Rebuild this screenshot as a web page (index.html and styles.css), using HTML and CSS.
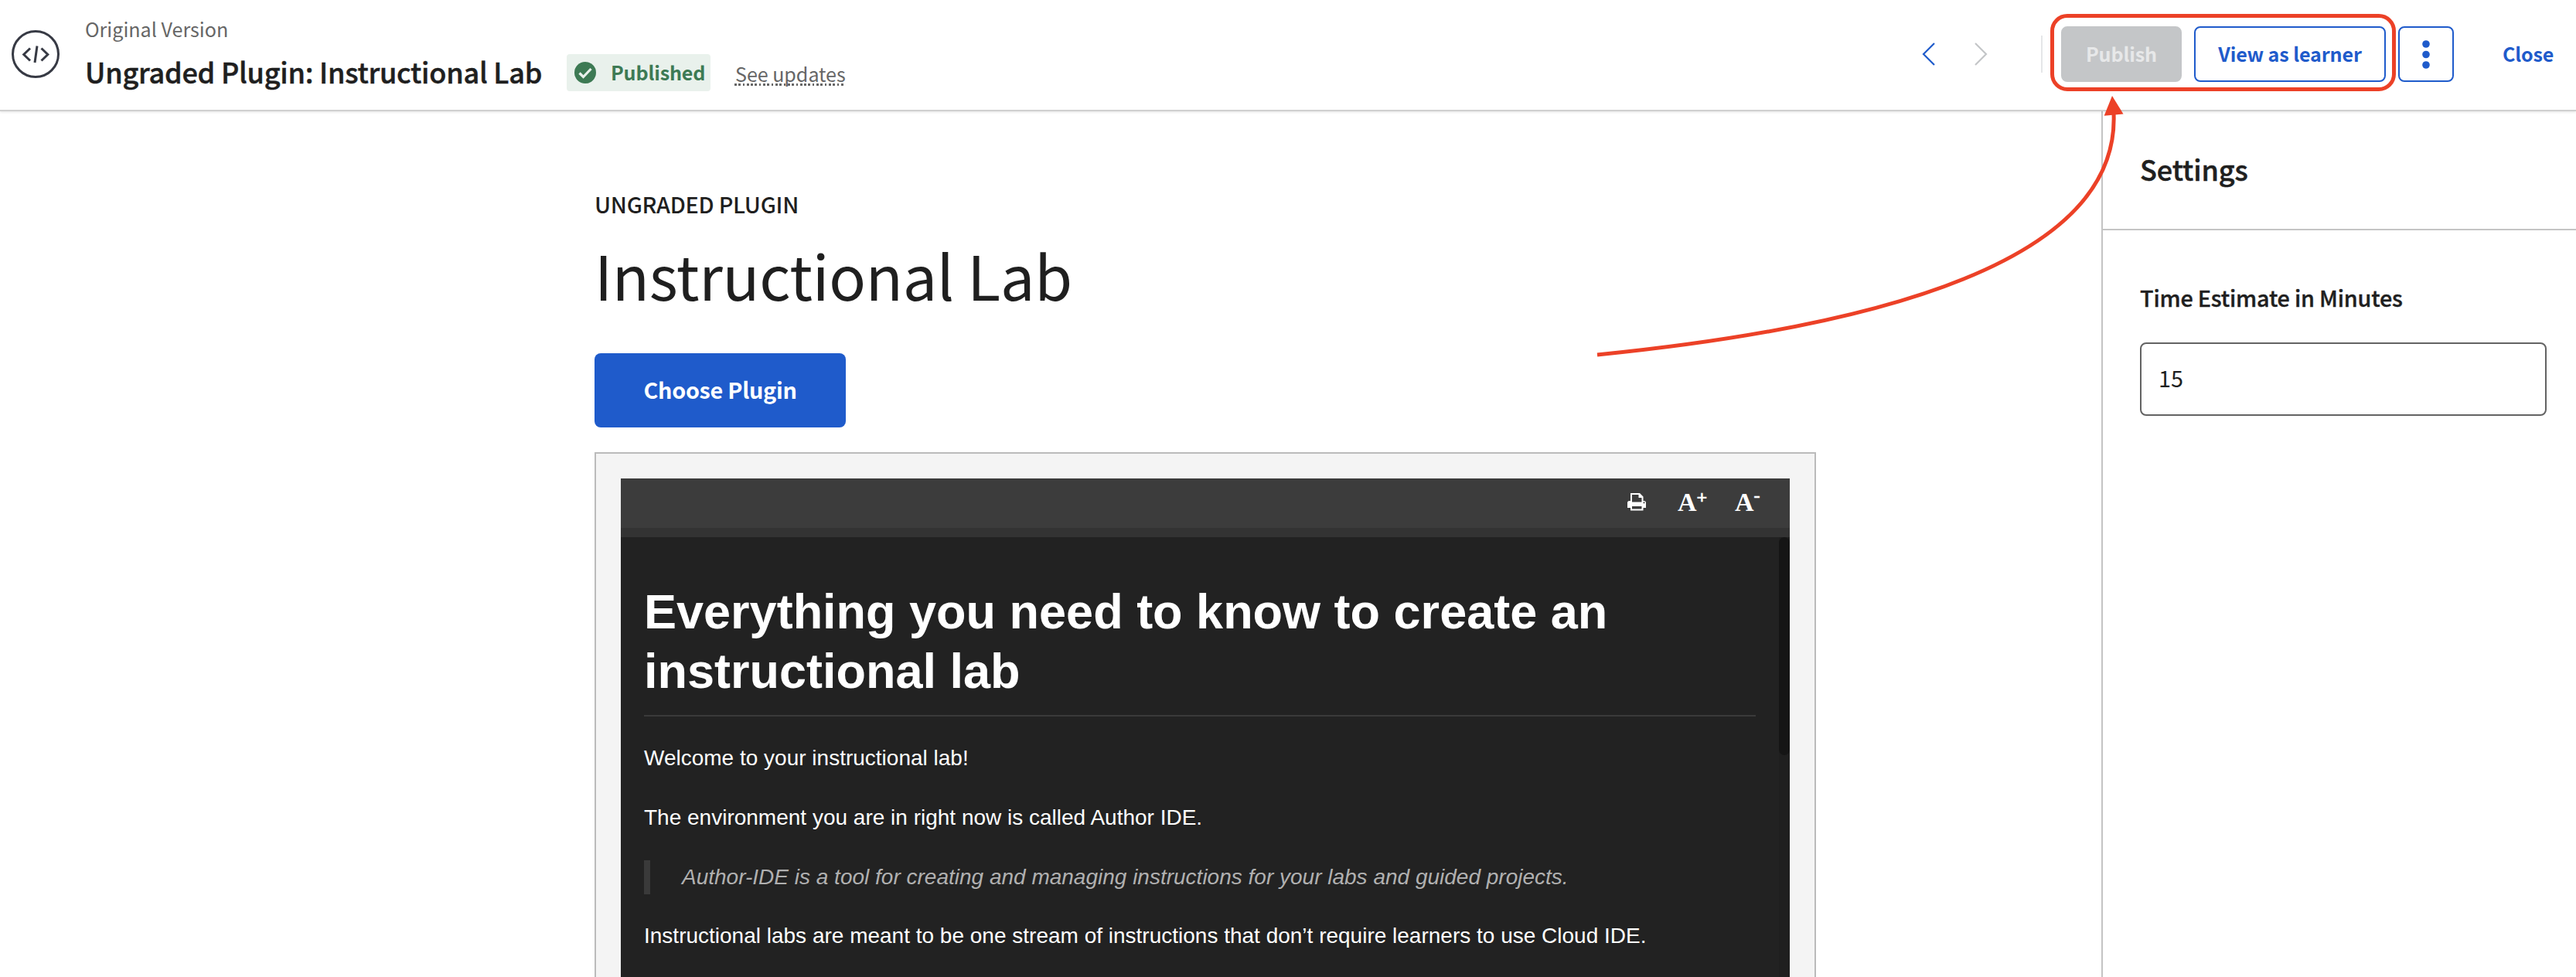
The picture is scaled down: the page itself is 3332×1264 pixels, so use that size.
FILE: index.html
```html
<!DOCTYPE html>
<html lang="en">
<head>
<meta charset="utf-8">
<title>Ungraded Plugin: Instructional Lab</title>
<link rel="stylesheet" href="styles.css">
</head>
<body>
<header class="topbar">
  <svg class="type-icon" width="62" height="62" viewBox="0 0 62 62" fill="none" stroke="#373a44" stroke-width="3">
    <circle cx="31" cy="31" r="29.5"/>
    <path d="M24 23.500l-8.300 8 8.300 8M38.500 23.500l8.300 8-8.300 8M33 20.500l-3 21.500"/>
  </svg>
  <div class="heading">
    <div class="version">Original Version</div>
    <div class="title-row">
      <div class="title">Ungraded Plugin: Instructional Lab</div>
      <div class="chip">
        <svg width="28" height="28" viewBox="0 0 28 28"><circle cx="14" cy="14" r="14" fill="#3d7a54"/><path d="M6.500 14.500l5 5L21.500 9" fill="none" stroke="#e9f1ec" stroke-width="3.200"/></svg>
        <span>Published</span>
      </div>
      <a class="updates">See updates</a>
    </div>
  </div>
  <div class="actions">
    <svg class="prev" width="18" height="30" viewBox="0 0 18 30" fill="none" stroke="#1f5bcb" stroke-width="2.200"><path d="M16 1L2 15l14 14"/></svg>
    <svg class="next" width="18" height="30" viewBox="0 0 18 30" fill="none" stroke="#c4c6c8" stroke-width="2.200"><path d="M2 1l14 14L2 29"/></svg>
    <div class="divider"></div>
    <button class="btn publish">Publish</button>
    <button class="btn view">View as learner</button>
    <button class="btn more"><svg width="10" height="37" viewBox="0 0 10 37" fill="#1f5bcb"><circle cx="5" cy="5" r="4.800"/><circle cx="5" cy="18.500" r="4.800"/><circle cx="5" cy="32" r="4.800"/></svg></button>
    <a class="close">Close</a>
  </div>
</header>
<div class="page">
  <main class="content">
    <div class="eyebrow">UNGRADED PLUGIN</div>
    <h1 class="name">Instructional Lab</h1>
    <button class="choose">Choose Plugin</button>
    <div class="frame">
      <div class="toolbar">
        <svg class="printer" width="24" height="23" viewBox="0 0 24 23"><path fill="#fff" fill-rule="evenodd" d="M4 0H16L20.500 4.500V10H21.500Q24 10 24 12.500V19H20.500V22.500H4V19H0V12.500Q0 10 2.500 10H4ZM6 2V11.500H18.500V6H14.500V2ZM6 17V20.500H18.500V17ZM21.500 11.300a1 1 0 1 0 .010 0Z"/></svg>
        <span class="font-btn">A<sup class="plus">+</sup></span>
        <span class="font-btn">A<sup class="minus">-</sup></span>
      </div>
      <div class="doc">
        <div class="scrollbar"><div class="thumb"></div></div>
        <h2>Everything you need to know to create an<br>instructional lab</h2>
        <p>Welcome to your instructional lab!</p>
        <p>The environment you are in right now is called Author IDE.</p>
        <blockquote>Author-IDE is a tool for creating and managing instructions for your labs and guided projects.</blockquote>
        <p>Instructional labs are meant to be one stream of instructions that don’t require learners to use Cloud IDE.</p>
      </div>
    </div>
  </main>
  <aside class="settings">
    <div class="settings-head">Settings</div>
    <div class="settings-body">
      <label class="label" for="minutes">Time Estimate in Minutes</label>
      <input class="minutes" id="minutes" value="15">
    </div>
  </aside>
</div>
<div class="highlight"></div>
<svg class="arrow" width="700" height="350" viewBox="2060 120 700 350"><path d="M2066 459Q2745 391 2734 146" fill="none" stroke="#ec4127" stroke-width="5"/><path d="M2732 124L2746.500 147.500 2721.700 149.800Z" fill="#ec4127"/></svg>
</body>
</html>
```
FILE: styles.css
```css
* { box-sizing: border-box; }
body {
  margin: 0;
  width: 3332px;
  height: 1264px;
  overflow: hidden;
  position: relative;
  background: #fff;
  color: #1f1f1f;
  font-family: "Noto Sans CJK SC", "Open Sans", sans-serif;
}
button { font-family: inherit; margin: 0; }
.topbar {
  position: relative;
  z-index: 1;
  display: flex;
  height: 144px;
  padding-left: 15px;
  background: #fff;
  border-bottom: 2px solid #d0d0d0;
  box-shadow: 0 1px 3px rgba(0, 0, 0, .12);
}
.type-icon { margin: 39px 33px 0 0; }
.heading { padding-top: 21px; }
.version { font-size: 25.1px; line-height: 32px; color: #666; }
.title-row { display: flex; align-items: flex-start; margin-top: 15px; white-space: nowrap; }
.title { width: 593px; font-size: 36px; line-height: 48px; font-weight: 500; letter-spacing: -.22px; -webkit-text-stroke: .5px #1f1f1f; }
.chip {
  display: flex;
  align-items: center;
  gap: 19px;
  width: 186px;
  height: 48px;
  margin: 2px 0 0 30px;
  padding: 0 0 0 10px;
  border-radius: 4px;
  background: #e9f1ec;
  color: #3d7a54;
  font-size: 25.1px;
  font-weight: 700;
  letter-spacing: -.15px;
  line-height: 46px;
}
.chip span { padding-bottom: 2px; }
.updates {
  width: 143px;
  margin: 11px 0 0 31px;
  padding-left: 1px;
  font-size: 25.1px;
  line-height: 32px;
  height: 32px;
  letter-spacing: -.05px;
  color: #666;
  background: repeating-linear-gradient(90deg, #666 0 2.700px, transparent 2.700px 5.300px) left bottom / 100% 3px no-repeat;
}
.actions { display: flex; align-items: center; height: 72px; margin: 34px 29px 0 auto; }
.prev { margin-right: 49px; }
.next { margin-right: 69px; }
.divider { width: 2px; height: 48px; margin-right: 24px; background: #e5e6e8; }
.btn {
  height: 72px;
  padding: 0 0 2px;
  border: 2px solid #1f5bcb;
  border-radius: 8px;
  background: #fff;
  color: #1f5bcb;
  font-size: 25.1px;
  font-weight: 700;
  letter-spacing: -.13px;
  line-height: 66px;
}
.publish { width: 156px; margin-right: 16px; background: #c4c6c8; border-color: #c4c6c8; color: #e7e8e9; }
.view { width: 248px; margin-right: 16px; }
.more { display: flex; align-items: center; justify-content: center; width: 72px; padding: 0; }
.close { width: 66px; margin-left: 63px; padding-bottom: 2px; color: #1f5bcb; font-size: 25.1px; font-weight: 700; letter-spacing: -.15px; line-height: 70px; }
.page { display: flex; height: 1120px; }
.content { width: 2718px; padding: 100px 369px 0 769px; }
.eyebrow { font-size: 28.800px; line-height: 40px; font-weight: 500; letter-spacing: -.27px; }
.name { margin: 21px 0 52px; font-size: 79px; line-height: 100px; font-weight: 400; letter-spacing: -.3px; white-space: nowrap; }
.choose {
  display: block;
  width: 325px;
  height: 96px;
  padding: 0 0 2px;
  border: 0;
  border-radius: 8px;
  background: #1f5bcb;
  color: #fff;
  font-size: 28.800px;
  font-weight: 700;
  letter-spacing: -.28px;
  line-height: 94px;
}
.frame {
  margin-top: 32px;
  padding: 32px 32px 0;
  border: 2px solid #bbb;
  border-bottom: 0;
  background: #f4f4f4;
}
.toolbar {
  display: flex;
  height: 76px;
  padding: 19px 0 0 1302px;
  border-bottom: 12px solid #333;
  background: #3c3c3c;
  color: #fff;
}
.printer { flex: none; margin-right: 41px; }
.font-btn { flex: none; width: 74px; height: 36px; margin-top: -6px; font: bold 34px/36px "Liberation Serif", serif; white-space: nowrap; }
.font-btn sup { font-size: 24px; line-height: 0; -webkit-text-stroke: .6px #fff; }
.plus { vertical-align: 10px; }
.minus { vertical-align: 12px; }
.doc {
  position: relative;
  height: 569px;
  overflow: hidden;
  padding: 58px 44px 0 30px;
  background: #222;
  color: #fff;
  font: 28px/44.8px "Liberation Sans", sans-serif;
}
.scrollbar { position: absolute; top: 0; right: 0; width: 14px; height: 100%; background: #1f1f1f; }
.thumb { height: 282px; border-radius: 7px; background: #151515; }
.doc h2 { height: 174px; margin: 0 0 32px; border-bottom: 2px solid #3a3a3a; font-size: 63px; line-height: 76.5px; white-space: nowrap; }
.doc p { margin: 0 0 32px; white-space: nowrap; }
.doc blockquote { margin: 0 0 32px; padding-left: 41px; border-left: 8px solid #3a3a3a; color: #b0b0b0; font-style: italic; }
.settings { width: 614px; border-left: 2px solid #c4c4c4; }
.settings-head { height: 154px; padding: 49px 0 0 48px; border-bottom: 2px solid #c4c4c4; font-size: 36px; line-height: 50px; font-weight: 500; letter-spacing: -.1px; -webkit-text-stroke: .5px #1f1f1f; }
.settings-body { padding: 67px 38px 0 48px; }
.label { display: block; margin-bottom: 38px; font-size: 28.800px; line-height: 40px; font-weight: 500; letter-spacing: -.21px; -webkit-text-stroke: .4px #1f1f1f; }
.minutes {
  display: block;
  width: 100%;
  height: 95px;
  padding: 0 22px 4px;
  border: 2px solid #636363;
  border-radius: 8px;
  background: #fff;
  color: #1f1f1f;
  font: 28.800px "Noto Sans CJK SC", sans-serif;
}
.highlight { position: absolute; z-index: 2; left: 2652px; top: 18px; width: 447px; height: 100px; border: 5px solid #ec4127; border-radius: 22px; }
.arrow { position: absolute; z-index: 2; left: 2060px; top: 120px; }
```
